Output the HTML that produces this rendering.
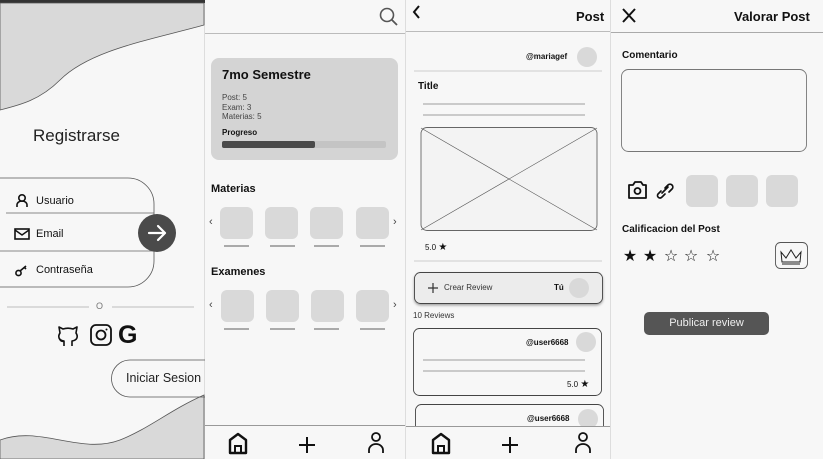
<!DOCTYPE html><html><head><meta charset="utf-8"><style>
*{margin:0;padding:0;box-sizing:border-box}
body{width:823px;height:459px;overflow:hidden;background:#f7f7f7;font-family:"Liberation Sans",sans-serif;color:#111;position:relative}
.a{position:absolute}
.b{font-weight:bold}
.hl{position:absolute;height:1px;background:#bbb}
.box{position:absolute;background:#d9d9d9;border-radius:6px}
.ul{position:absolute;height:2px;background:#aaa;width:25px}
.st{position:absolute;top:246px;font-size:16px;font-family:"DejaVu Sans",sans-serif;width:20px;text-align:center;line-height:20px}
</style></head><body>
<div class="a" style="left:204px;top:0;width:1px;height:459px;background:#ddd"></div>
<div class="a" style="left:405px;top:0;width:1px;height:459px;background:#ddd"></div>
<div class="a" style="left:610px;top:0;width:1px;height:459px;background:#ddd"></div>
<div class="a" style="left:0;top:0;width:205px;height:3px;background:#333"></div>

<svg class="a" style="left:0;top:0" width="205" height="459">
<path d="M0 3 H204 V25 C150 40 90 50 60 80 C40 100 20 105 0 110 Z" fill="#d9d9d9" stroke="#555" stroke-width="0.8"/>
<path d="M0 459 V440 C40 425 80 455 120 440 C150 428 170 410 204 395 V459 Z" fill="#d9d9d9" stroke="#555" stroke-width="0.8"/>
<path d="M0 178 H128 A26 26 0 0 1 154 204 V261 A26 26 0 0 1 128 287 H0" fill="none" stroke="#555" stroke-width="0.8"/>
<line x1="6" y1="213" x2="154" y2="213" stroke="#666" stroke-width="0.8"/>
<line x1="0" y1="251" x2="154" y2="251" stroke="#666" stroke-width="0.8"/>
<circle cx="157" cy="233" r="19" fill="#4a4a4a"/>
<path d="M149 233 H165 M158 226 L165 233 L158 240" stroke="#fff" stroke-width="2.2" fill="none" stroke-linecap="round" stroke-linejoin="round"/>
<circle cx="22" cy="198" r="3.2" fill="none" stroke="#111" stroke-width="1.6"/>
<path d="M17 207 V205 A5 4 0 0 1 27 205 V207" fill="none" stroke="#111" stroke-width="1.6"/>
<rect x="15" y="229" width="14" height="10" fill="none" stroke="#111" stroke-width="1.6"/>
<path d="M15 230 L22 235 L29 230" fill="none" stroke="#111" stroke-width="1.4"/>
<circle cx="18.5" cy="273" r="2.6" fill="none" stroke="#111" stroke-width="1.6"/>
<path d="M20 271 L26 266 M24 267 L26 269" stroke="#111" stroke-width="1.6"/>
<line x1="7" y1="307" x2="89" y2="307" stroke="#aaa" stroke-width="0.8"/>
<line x1="112" y1="307" x2="194" y2="307" stroke="#aaa" stroke-width="0.8"/>
<path d="M64 346 V341 C58 340 58 336 60 333 L59 327 L63 329 C66 328 70 328 73 329 L77 327 L76 333 C78 336 78 340 72 341 V346 M64 341 C61 342 60 340 59 338" fill="none" stroke="#111" stroke-width="1.6" stroke-linejoin="round"/>
<rect x="91" y="325" width="20" height="20" rx="5" fill="none" stroke="#111" stroke-width="1.8"/>
<circle cx="101" cy="335" r="4.5" fill="none" stroke="#111" stroke-width="1.8"/>
<circle cx="106.5" cy="329.5" r="1" fill="#111"/>
<path d="M398 397 H130 A18.5 18.5 0 0 1 130 360 H205" fill="none" stroke="#555" stroke-width="0.8"/>
</svg>
<div class="a" style="left:33px;top:126px;font-size:17px;color:#222">Registrarse</div>
<div class="a" style="left:36px;top:195px;font-size:11px">Usuario</div>
<div class="a" style="left:36px;top:228px;font-size:11px">Email</div>
<div class="a" style="left:36px;top:264px;font-size:11px">Contraseña</div>
<div class="a" style="left:96px;top:301px;font-size:9px;color:#777">O</div>
<div class="a b" style="left:118px;top:321px;font-size:25px">G</div>
<div class="a" style="left:126px;top:371px;font-size:12.5px;color:#222">Iniciar Sesion</div>

<div class="hl" style="left:205px;top:33px;width:200px"></div>
<svg class="a" style="left:378px;top:6px" width="22" height="22"><circle cx="9" cy="9" r="6.5" fill="none" stroke="#555" stroke-width="1.6"/><line x1="14" y1="14" x2="19" y2="19" stroke="#555" stroke-width="1.8"/></svg>
<div class="a" style="left:211px;top:58px;width:187px;height:102px;background:#d4d4d4;border-radius:8px"></div>
<div class="a b" style="left:222px;top:67px;font-size:13px">7mo Semestre</div>
<div class="a" style="left:222px;top:93px;font-size:8px;line-height:9.7px;color:#444">Post: 5<br>Exam: 3<br>Materias: 5</div>
<div class="a b" style="left:222px;top:128px;font-size:8px">Progreso</div>
<div class="a" style="left:222px;top:141px;width:164px;height:7px;background:#c4c4c4;border-radius:2px"></div>
<div class="a" style="left:222px;top:141px;width:93px;height:7px;background:#4a4a4a;border-radius:2px"></div>
<div class="a b" style="left:211px;top:183px;font-size:11px">Materias</div>
<div class="a b" style="left:211px;top:266px;font-size:11px">Examenes</div>
<div class="box" style="left:220px;top:207px;width:33px;height:32px"></div>
<div class="box" style="left:265px;top:207px;width:33px;height:32px"></div>
<div class="box" style="left:310px;top:207px;width:33px;height:32px"></div>
<div class="box" style="left:356px;top:207px;width:33px;height:32px"></div>
<div class="box" style="left:221px;top:290px;width:33px;height:32px"></div>
<div class="box" style="left:266px;top:290px;width:33px;height:32px"></div>
<div class="box" style="left:311px;top:290px;width:33px;height:32px"></div>
<div class="box" style="left:356px;top:290px;width:33px;height:32px"></div>
<div class="ul" style="left:224px;top:245px"></div><div class="ul" style="left:270px;top:245px"></div><div class="ul" style="left:314px;top:245px"></div><div class="ul" style="left:360px;top:245px"></div>
<div class="ul" style="left:224px;top:328px"></div><div class="ul" style="left:270px;top:328px"></div><div class="ul" style="left:314px;top:328px"></div><div class="ul" style="left:360px;top:328px"></div>
<div class="a" style="left:209px;top:216px;font-size:11px;color:#444">‹</div><div class="a" style="left:393px;top:216px;font-size:11px;color:#444">›</div>
<div class="a" style="left:209px;top:299px;font-size:11px;color:#444">‹</div><div class="a" style="left:393px;top:299px;font-size:11px;color:#444">›</div>
<div class="hl" style="left:205px;top:425px;width:200px;background:#999"></div>
<svg class="a" style="left:205px;top:427px" width="200" height="32">
<path d="M25 26 V13 L33 7 L41 13 V26 Z" fill="none" stroke="#111" stroke-width="2.4" stroke-linejoin="round"/>
<path d="M30 26 V19 H36 V26" fill="none" stroke="#111" stroke-width="2"/>
<path d="M102 10 V26 M94 18 H110" stroke="#111" stroke-width="2"/>
<circle cx="171" cy="10" r="4" fill="none" stroke="#111" stroke-width="1.8"/>
<path d="M164 26 V23 A7 6 0 0 1 178 23 V26" fill="none" stroke="#111" stroke-width="1.8"/>
</svg>

<svg class="a" style="left:406px;top:0" width="205" height="459">
<defs><filter id="sh" x="-10%" y="-30%" width="120%" height="170%"><feDropShadow dx="0" dy="1.5" stdDeviation="1.2" flood-opacity="0.35"/></filter></defs>
<path d="M13 6 L8 12 L13 18" fill="none" stroke="#111" stroke-width="2"/>
<circle cx="181" cy="57" r="10" fill="#d9d9d9"/>
<line x1="17" y1="104" x2="179" y2="104" stroke="#bbb" stroke-width="1.6"/>
<line x1="17" y1="115" x2="179" y2="115" stroke="#bbb" stroke-width="1.6"/>
<rect x="15" y="127.5" width="176" height="103" rx="6" fill="#f3f3f3" stroke="#666" stroke-width="0.9"/>
<line x1="15" y1="128" x2="191" y2="230" stroke="#555" stroke-width="0.6"/>
<line x1="191" y1="128" x2="15" y2="230" stroke="#555" stroke-width="0.6"/>
<rect x="8.5" y="272.5" width="188" height="31" rx="6" fill="#ececec" stroke="#444" stroke-width="0.9" filter="url(#sh)"/>
<path d="M27 283 V293 M22 288 H32" stroke="#333" stroke-width="1.2"/>
<circle cx="173" cy="288" r="10" fill="#d9d9d9"/>
<rect x="7.5" y="328.5" width="188" height="67" rx="6" fill="none" stroke="#444" stroke-width="0.9"/>
<circle cx="180" cy="342" r="10" fill="#d9d9d9"/>
<line x1="17" y1="360" x2="179" y2="360" stroke="#bbb" stroke-width="1.6"/>
<line x1="17" y1="371" x2="179" y2="371" stroke="#bbb" stroke-width="1.6"/>
<rect x="9.5" y="404.5" width="188" height="40" rx="6" fill="none" stroke="#444" stroke-width="0.9"/>
<circle cx="182" cy="419" r="10" fill="#d9d9d9"/>
</svg>
<div class="a b" style="left:576px;top:9px;font-size:13px">Post</div>
<div class="hl" style="left:406px;top:31px;width:204px"></div>
<div class="a b" style="left:526px;top:52px;font-size:8px">@mariagef</div>
<div class="hl" style="left:414px;top:70px;width:188px;background:#e2e2e2;height:2px"></div>
<div class="a b" style="left:418px;top:81px;font-size:10px">Title</div>
<div class="a" style="left:425px;top:242px;font-size:8px">5.0 <span style="font-size:10px">★</span></div>
<div class="hl" style="left:414px;top:260px;width:188px;background:#e2e2e2;height:2px"></div>
<div class="a" style="left:444px;top:283px;font-size:8px;color:#333">Crear Review</div>
<div class="a b" style="left:554px;top:283px;font-size:8px">Tú</div>
<div class="a" style="left:413px;top:311px;font-size:8px;color:#333">10 Reviews</div>
<div class="a b" style="left:526px;top:338px;font-size:8px">@user6668</div>
<div class="a" style="left:567px;top:379px;font-size:8px">5.0 <span style="font-size:10px">★</span></div>
<div class="a b" style="left:527px;top:414px;font-size:8px">@user6668</div>
<div class="a" style="left:406px;top:427px;width:204px;height:32px;background:#f7f7f7"></div>
<div class="hl" style="left:406px;top:426px;width:204px;background:#999"></div>
<svg class="a" style="left:406px;top:427px" width="205" height="32">
<path d="M27 26 V13 L35 7 L43 13 V26 Z" fill="none" stroke="#111" stroke-width="2.4" stroke-linejoin="round"/>
<path d="M32 26 V19 H38 V26" fill="none" stroke="#111" stroke-width="2"/>
<path d="M104 10 V26 M96 18 H112" stroke="#111" stroke-width="2"/>
<circle cx="177" cy="10" r="4" fill="none" stroke="#111" stroke-width="1.8"/>
<path d="M170 26 V23 A7 6 0 0 1 184 23 V26" fill="none" stroke="#111" stroke-width="1.8"/>
</svg>

<svg class="a" style="left:611px;top:0" width="212" height="459">
<path d="M12 9 L24 22 M24 9 L12 22" stroke="#111" stroke-width="2"/>
<rect x="10.5" y="69.5" width="185" height="82" rx="7" fill="none" stroke="#777" stroke-width="0.9"/>
<path d="M18 185 H22 L24 182 H30 L32 185 H35 V198 H18 Z" fill="none" stroke="#111" stroke-width="1.8" stroke-linejoin="round"/>
<circle cx="26.5" cy="191" r="3" fill="none" stroke="#111" stroke-width="1.8"/>
<path d="M50 191 L47 194 A2.5 2.5 0 0 0 51 197 L54 194 M54 188 L57 185 A2.5 2.5 0 0 1 61 189 L58 192 M51 193 L57 187" fill="none" stroke="#111" stroke-width="1.7" stroke-linecap="round"/>
<rect x="164.5" y="242.5" width="32" height="26" rx="5" fill="none" stroke="#555" stroke-width="0.9"/>
<path d="M170 252 L175 258 L180 250 L185 258 L190 252 L189 262 H171 Z M171 264 H189" fill="none" stroke="#222" stroke-width="1"/>
</svg>
<div class="a b" style="left:734px;top:9px;font-size:13px">Valorar Post</div>
<div class="hl" style="left:611px;top:32px;width:212px;background:#aaa"></div>
<div class="a b" style="left:622px;top:50px;font-size:10px">Comentario</div>
<div class="box" style="left:686px;top:175px;width:32px;height:32px"></div>
<div class="box" style="left:726px;top:175px;width:32px;height:32px"></div>
<div class="box" style="left:766px;top:175px;width:32px;height:32px"></div>
<div class="a b" style="left:622px;top:224px;font-size:10px">Calificacion del Post</div>
<div class="st" style="left:620px">★</div>
<div class="st" style="left:640px">★</div>
<div class="st" style="left:661px">☆</div>
<div class="st" style="left:681px">☆</div>
<div class="st" style="left:703px">☆</div>
<div class="a" style="left:644px;top:312px;width:125px;height:23px;background:#555;border-radius:5px;color:#eee;font-size:11px;text-align:center;line-height:23px">Publicar review</div>
</body></html>
